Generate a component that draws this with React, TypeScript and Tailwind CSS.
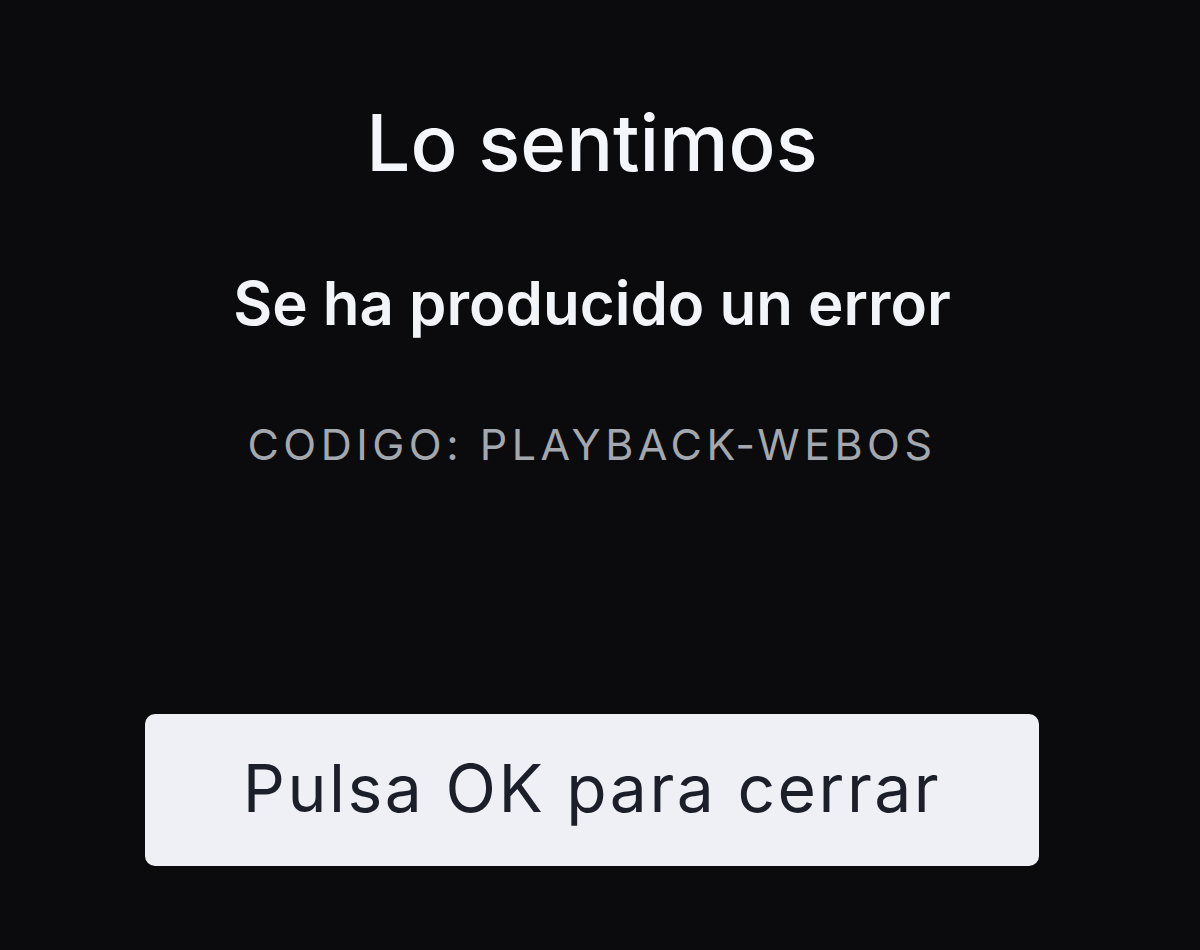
export default function App() {
  return (
    <div
      className="w-[1200px] h-[950px] bg-[#0b0b0e] overflow-hidden"
      style={{ fontFamily: "Inter, 'Noto Sans', sans-serif" }}
    >
      <div className="flex flex-col items-center pr-[16px] pt-[98px]">
        <h1 className="text-[78px] leading-[90px] font-medium text-[#f4f6fb]">
          Lo sentimos
        </h1>
        <p className="mt-[80px] text-[60px] leading-[70px] font-semibold text-[#f2f4f8]">
          Se ha producido un error
        </p>
        <p className="mt-[81px] text-[43px] leading-[50px] text-[#a3a7ae] tracking-[4.5px]">
          CODIGO: PLAYBACK-WEBOS
        </p>
        <button className="mt-[245px] w-[894px] h-[152px] rounded-[10px] bg-[#eef0f5] text-[#1c1e2a] text-[66px] tracking-[2.5px] flex items-center justify-center pb-[4px]">
          Pulsa OK para cerrar
        </button>
      </div>
    </div>
  );
}
